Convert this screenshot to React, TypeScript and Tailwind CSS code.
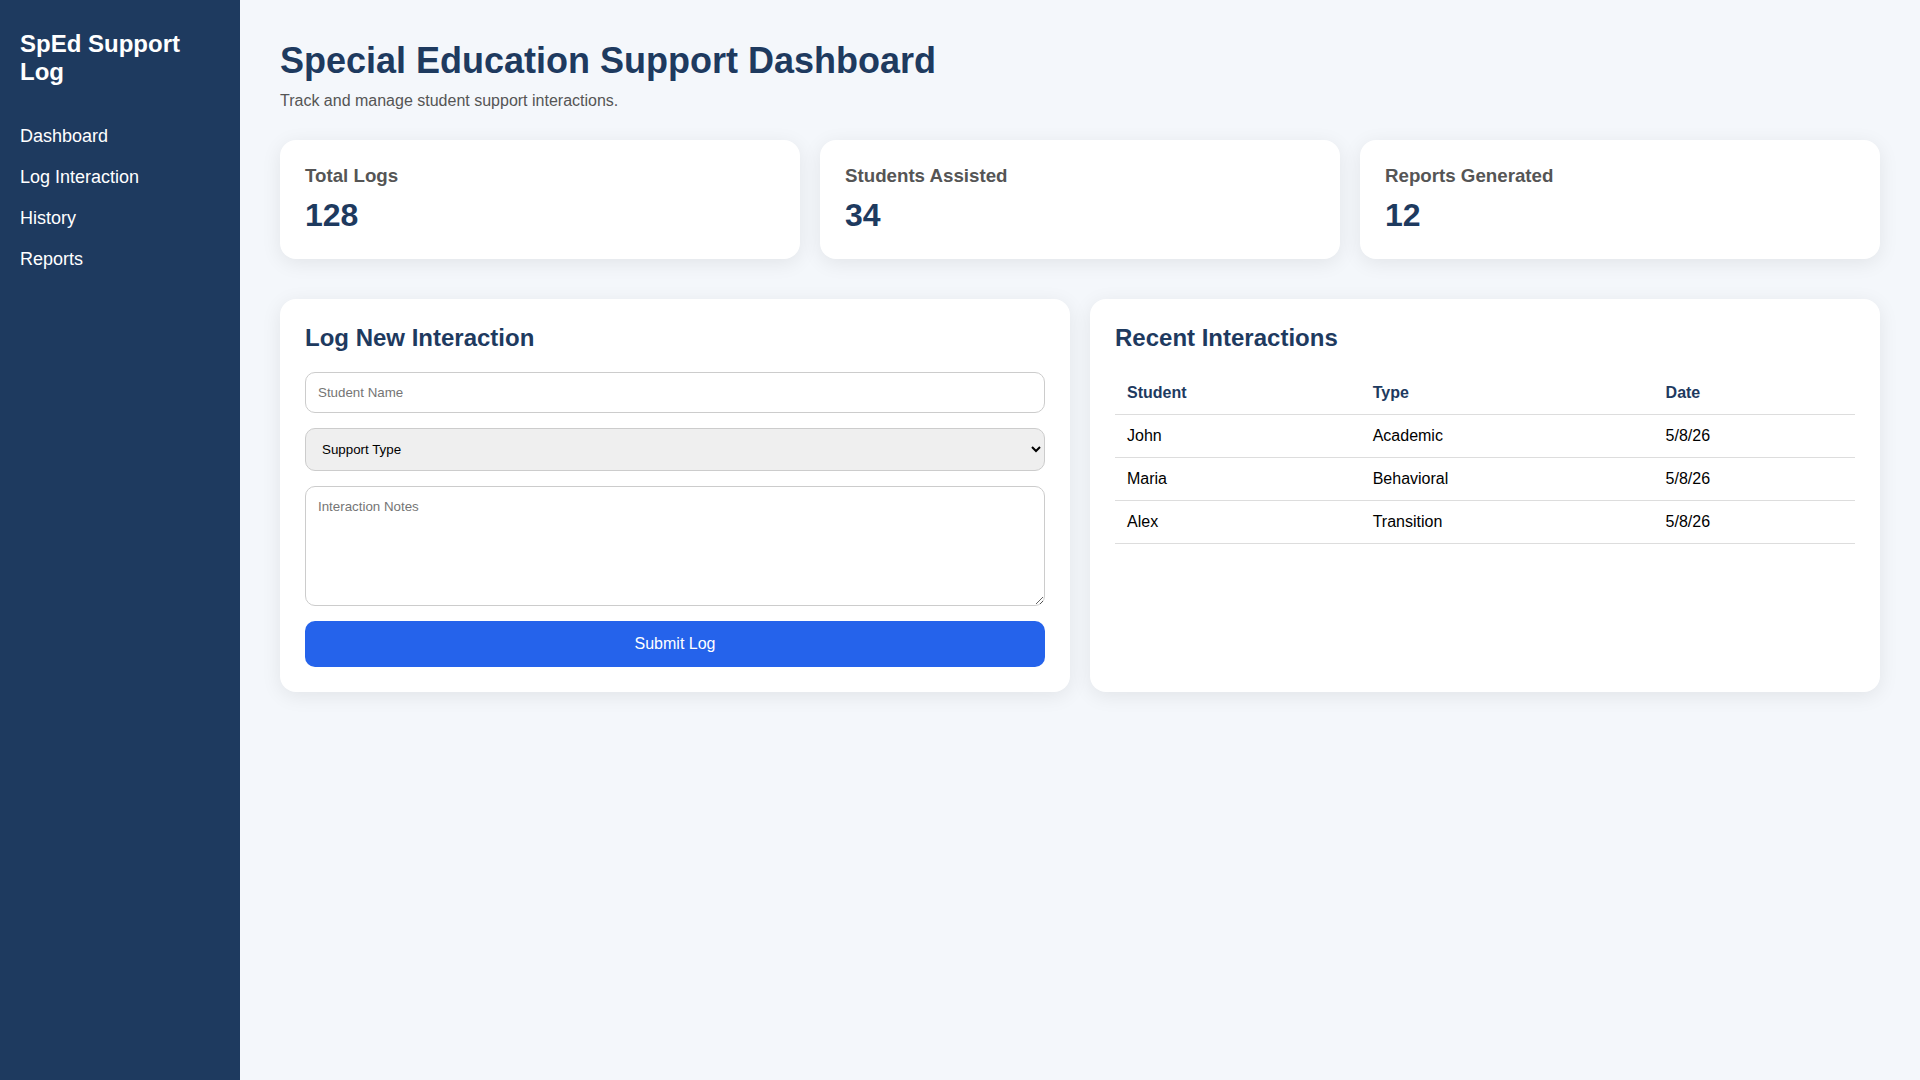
const stats = [
  { label: "Total Logs", value: "128" },
  { label: "Students Assisted", value: "34" },
  { label: "Reports Generated", value: "12" },
];

const rows = [
  { student: "John", type: "Academic", date: "5/8/26" },
  { student: "Maria", type: "Behavioral", date: "5/8/26" },
  { student: "Alex", type: "Transition", date: "5/8/26" },
];

const navItems = ["Dashboard", "Log Interaction", "History", "Reports"];

const cardClass = "rounded-2xl bg-white p-[25px] shadow-[0_4px_20px_rgba(0,0,0,0.08)]";
const fieldClass =
  "w-full rounded-[10px] border border-[#ccc] p-3 text-[13.333px] placeholder:text-[#757575]";

export default function App() {
  return (
    <div className="flex min-h-screen bg-[#f4f7fb] font-['Liberation_Sans',Arial,sans-serif] leading-[normal] text-black">
      <aside className="w-[240px] shrink-0 bg-[#1e3a5f] px-5 py-[30px] text-white">
        <h2 className="mb-10 text-2xl leading-[normal] font-bold">SpEd Support Log</h2>
        <nav>
          <ul className="flex flex-col gap-5">
            {navItems.map((item) => (
              <li key={item} className="text-lg leading-[normal]">
                {item}
              </li>
            ))}
          </ul>
        </nav>
      </aside>

      <main className="flex-1 p-10">
        <h1 className="text-4xl leading-[normal] font-bold text-[#1e3a5f]">
          Special Education Support Dashboard
        </h1>
        <p className="mt-2.5 text-base leading-[normal] text-[#555]">Track and manage student support interactions.</p>

        <section className="mt-[30px] grid grid-cols-3 gap-5">
          {stats.map((stat) => (
            <div key={stat.label} className={cardClass}>
              <h3 className="text-[18.72px] leading-[normal] font-bold text-[#555]">{stat.label}</h3>
              <p className="mt-2.5 text-[32px] leading-[normal] font-bold text-[#1e3a5f]">{stat.value}</p>
            </div>
          ))}
        </section>

        <section className="mt-10 grid grid-cols-2 gap-5">
          <div className={cardClass}>
            <h2 className="mb-5 text-2xl leading-[normal] font-bold text-[#1e3a5f]">Log New Interaction</h2>
            <form className="flex flex-col gap-[15px]">
              <input type="text" placeholder="Student Name" className={fieldClass} />
              <select className="w-full rounded-[10px] border border-[#ccc] bg-[#efefef] p-3 text-[13.333px]">
                <option>Support Type</option>
                <option>Academic</option>
                <option>Behavioral</option>
                <option>Transition</option>
              </select>
              <textarea placeholder="Interaction Notes" rows={5} className={`${fieldClass} block h-[120px]`} />
              <button type="button" className="rounded-[10px] bg-[#2563eb] p-[14px] text-base leading-[normal] text-white">
                Submit Log
              </button>
            </form>
          </div>

          <div className={cardClass}>
            <h2 className="mb-5 text-2xl leading-[normal] font-bold text-[#1e3a5f]">Recent Interactions</h2>
            <table className="w-full border-collapse">
              <thead>
                <tr>
                  <th className="border-b border-[#ddd] p-3 text-left font-bold text-[#1e3a5f]">Student</th>
                  <th className="border-b border-[#ddd] p-3 text-left font-bold text-[#1e3a5f]">Type</th>
                  <th className="border-b border-[#ddd] p-3 text-left font-bold text-[#1e3a5f]">Date</th>
                </tr>
              </thead>
              <tbody>
                {rows.map((row) => (
                  <tr key={row.student}>
                    <td className="border-b border-[#ddd] p-3">{row.student}</td>
                    <td className="border-b border-[#ddd] p-3">{row.type}</td>
                    <td className="border-b border-[#ddd] p-3">{row.date}</td>
                  </tr>
                ))}
              </tbody>
            </table>
          </div>
        </section>
      </main>
    </div>
  );
}
